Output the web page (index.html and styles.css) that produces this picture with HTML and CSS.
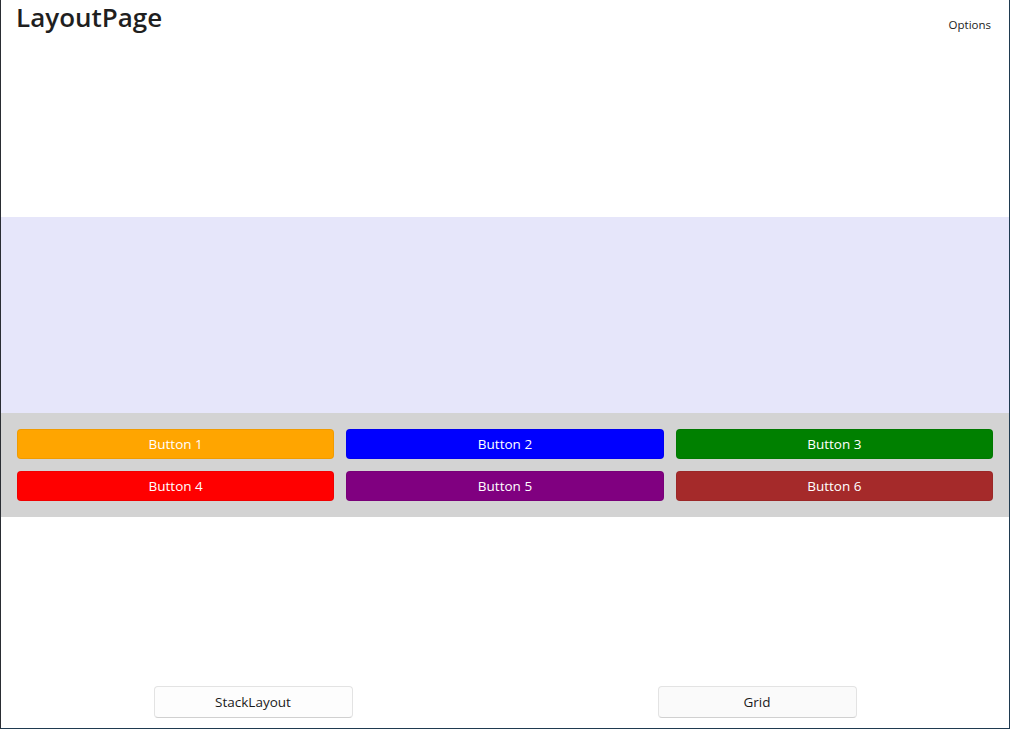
FILE: index.html
```html
<!DOCTYPE html>
<html>
<head>
<meta charset="utf-8">
<link rel="stylesheet" href="styles.css">
</head>
<body>
<div class="window">
  <header class="header">
    <h1 class="title">LayoutPage</h1>
    <span class="options">Options</span>
  </header>
  <section class="lavender"></section>
  <section class="buttons">
    <button class="cbtn orange">Button 1</button>
    <button class="cbtn blue">Button 2</button>
    <button class="cbtn green">Button 3</button>
    <button class="cbtn red">Button 4</button>
    <button class="cbtn purple">Button 5</button>
    <button class="cbtn brown">Button 6</button>
  </section>
  <div class="spacer"></div>
  <footer class="footer">
    <div class="fcell"><button class="fbtn">StackLayout</button></div>
    <div class="fcell"><button class="fbtn alt">Grid</button></div>
  </footer>
</div>
</body>
</html>
```
FILE: styles.css
```css
* { box-sizing: border-box; }
html, body { margin: 0; padding: 0; }
body {
  font-family: "Open Sans", "Noto Sans", sans-serif;
  background: #ffffff;
  color: #1b1b1b;
}
.window {
  width: 1010px;
  height: 729px;
  border-left: 1px solid #2a2d33;
  border-right: 1px solid #1f3a50;
  border-bottom: 1px solid #1f3a50;
  display: flex;
  flex-direction: column;
  background: #fff;
}
.header {
  height: 217px;
  display: flex;
  justify-content: space-between;
  align-items: flex-start;
  padding: 0 18px 0 15px;
}
.title {
  margin: 0;
  font-size: 26px;
  font-weight: 600;
  line-height: 34px;
  color: #1f1f1f;
  letter-spacing: 0;
}
.options {
  font-size: 11.5px;
  margin-top: 17px;
  color: #1b1b1b;
}
.lavender {
  height: 196px;
  background: #e6e6fa;
}
.buttons {
  height: 104px;
  background: #d3d3d3;
  padding: 16px 16px 0 16px;
  display: grid;
  grid-template-columns: repeat(3, 1fr);
  grid-auto-rows: 30px;
  column-gap: 12px;
  row-gap: 12px;
}
.cbtn {
  border: 1px solid rgba(0,0,0,0.06);
  border-radius: 4px;
  color: #ffffff;
  font-family: "Open Sans", "Noto Sans", sans-serif;
  font-size: 13.5px;
  padding: 0;
}
.orange { background: #ffa500; }
.blue { background: #0000ff; }
.green { background: #008000; }
.red { background: #ff0000; }
.purple { background: #800080; }
.brown { background: #a52a2a; }
.spacer { flex: 1; }
.footer {
  display: grid;
  grid-template-columns: 1fr 1fr;
  padding-bottom: 10px;
}
.fcell {
  display: flex;
  justify-content: center;
}
.fbtn {
  width: 199px;
  height: 32px;
  background: #fdfdfd;
  border: 1px solid #e3e3e3;
  border-bottom-color: #d0d0d0;
  border-radius: 4px;
  font-family: "Open Sans", "Noto Sans", sans-serif;
  font-size: 13.5px;
  color: #1b1b1b;
  padding: 0;
}
.fbtn.alt { background: #fafafa; }
```
